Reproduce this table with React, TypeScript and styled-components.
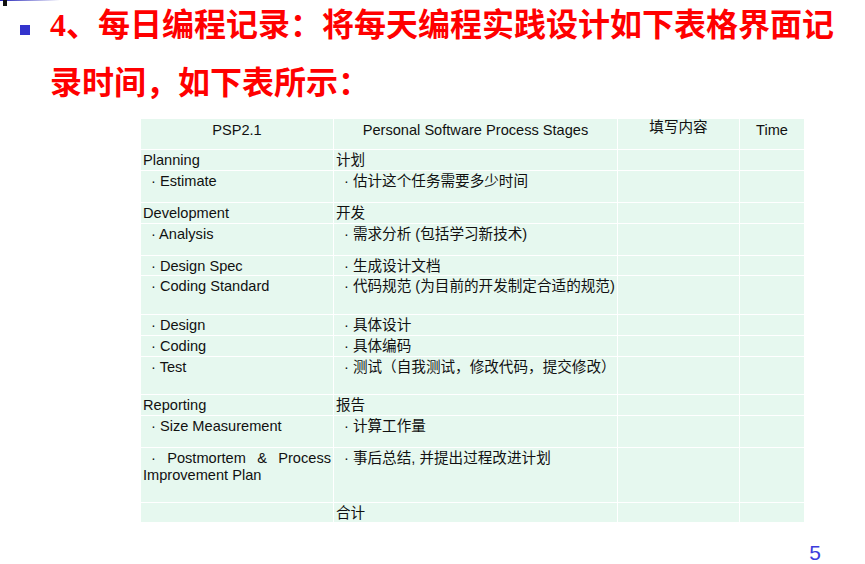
import styled, { createGlobalStyle } from "styled-components";

const GlobalStyle = createGlobalStyle`
  html, body {
    margin: 0;
    padding: 0;
    background: #ffffff;
  }
  body {
    width: 865px;
    height: 564px;
    overflow: hidden;
  }
`;

type Row = {
  stage: string;
  cn: string;
  sub?: boolean;
  height: number;
  justify?: boolean;
};

const ROWS: Row[] = [
  { stage: "Planning", cn: "计划", height: 21 },
  { stage: "Estimate", cn: "估计这个任务需要多少时间", sub: true, height: 32 },
  { stage: "Development", cn: "开发", height: 21 },
  { stage: "Analysis", cn: "需求分析 (包括学习新技术)", sub: true, height: 32 },
  { stage: "Design Spec", cn: "生成设计文档", sub: true, height: 20 },
  { stage: "Coding Standard", cn: "代码规范 (为目前的开发制定合适的规范)", sub: true, height: 39 },
  { stage: "Design", cn: "具体设计", sub: true, height: 21 },
  { stage: "Coding", cn: "具体编码", sub: true, height: 21 },
  { stage: "Test", cn: "测试（自我测试，修改代码，提交修改）", sub: true, height: 38 },
  { stage: "Reporting", cn: "报告", height: 21 },
  { stage: "Size Measurement", cn: "计算工作量", sub: true, height: 32 },
  {
    stage: "Postmortem & Process Improvement Plan",
    cn: "事后总结, 并提出过程改进计划",
    sub: true,
    justify: true,
    height: 55,
  },
  { stage: "", cn: "合计", height: 20 },
];

export default function App() {
  return (
    <>
      <GlobalStyle />
      <Slide>
        <Decor />
        <Heading>
          <Bullet />
          <Title>
            <Num>4</Num>、每日编程记录：将每天编程实践设计如下表格界面记录时间，如下表所示：
          </Title>
        </Heading>
        <Table>
          <colgroup>
            <col style={{ width: 193 }} />
            <col style={{ width: 284 }} />
            <col style={{ width: 122 }} />
            <col style={{ width: 65 }} />
          </colgroup>
          <tbody>
            <TRow $height={31}>
              <HeadCell>PSP2.1</HeadCell>
              <HeadCell>Personal Software Process Stages</HeadCell>
              <HeadCell $raised>填写内容</HeadCell>
              <HeadCell>Time</HeadCell>
            </TRow>
            {ROWS.map((r, i) => (
              <TRow key={i} $height={r.height}>
                <Cell $indent={r.sub && !r.justify} $justify={r.justify}>
                  {r.sub ? `· ${r.stage}` : r.stage}
                </Cell>
                <Cell $indent={r.sub}>{r.sub ? `· ${r.cn}` : r.cn}</Cell>
                <Cell />
                <Cell />
              </TRow>
            ))}
          </tbody>
        </Table>
        <Footer>
          <PageNum>5</PageNum>
        </Footer>
      </Slide>
    </>
  );
}

const Slide = styled.div`
  position: relative;
  display: flex;
  flex-direction: column;
  width: 865px;
  height: 564px;
`;

const Decor = styled.div`
  position: absolute;
  top: 0;
  left: 0;
  width: 60px;
  height: 1px;
  background: linear-gradient(to right, #2222b8, #ffffff);

  &::before {
    content: "";
    position: absolute;
    left: 3px;
    top: 0;
    width: 4px;
    height: 6px;
    background: #111111;
  }
`;

const Heading = styled.div`
  display: flex;
  align-items: flex-start;
  margin-top: -5px;
  padding-left: 20px;
`;

const Bullet = styled.span`
  flex: none;
  width: 10px;
  height: 10px;
  margin-top: 30px;
  margin-right: 20px;
  background: #3333cc;
`;

const Title = styled.h1`
  margin: 0;
  width: 790px;
  color: #ff0000;
  font-family: "Noto Sans CJK SC", sans-serif;
  font-size: 32px;
  font-weight: 700;
  line-height: 55px;
`;

const Num = styled.span`
  font-family: "Liberation Serif", serif;
`;

const Table = styled.table`
  margin-top: 10px;
  margin-left: 140px;
  width: 664px;
  table-layout: fixed;
  border-collapse: collapse;
  background: #e6f8ef;
  font-family: "Liberation Sans", "Noto Sans CJK SC", sans-serif;
  font-size: 14.6px;
  color: #111111;
`;

const TRow = styled.tr<{ $height: number }>`
  height: ${(p) => p.$height}px;
`;

const HeadCell = styled.td<{ $raised?: boolean }>`
  border: 1px solid #ffffff;
  padding: ${(p) => (p.$raised ? "0" : "3px")} 2px 0;
  vertical-align: top;
  text-align: center;
  line-height: 17px;
  font-weight: 400;
`;

const Cell = styled.td<{ $indent?: boolean; $justify?: boolean }>`
  border: 1px solid #ffffff;
  padding: 2px 2px 0 ${(p) => (p.$indent ? "10px" : "2px")};
  vertical-align: top;
  line-height: 17px;
  text-align: ${(p) => (p.$justify ? "justify" : "left")};
  text-indent: ${(p) => (p.$justify ? "8px" : "0")};
`;

const Footer = styled.div`
  display: flex;
  justify-content: flex-end;
  padding: 18px 44px 0 0;
`;

const PageNum = styled.span`
  color: #3c3cdc;
  font-family: "Liberation Sans", sans-serif;
  font-size: 21px;
  line-height: 24px;
`;
